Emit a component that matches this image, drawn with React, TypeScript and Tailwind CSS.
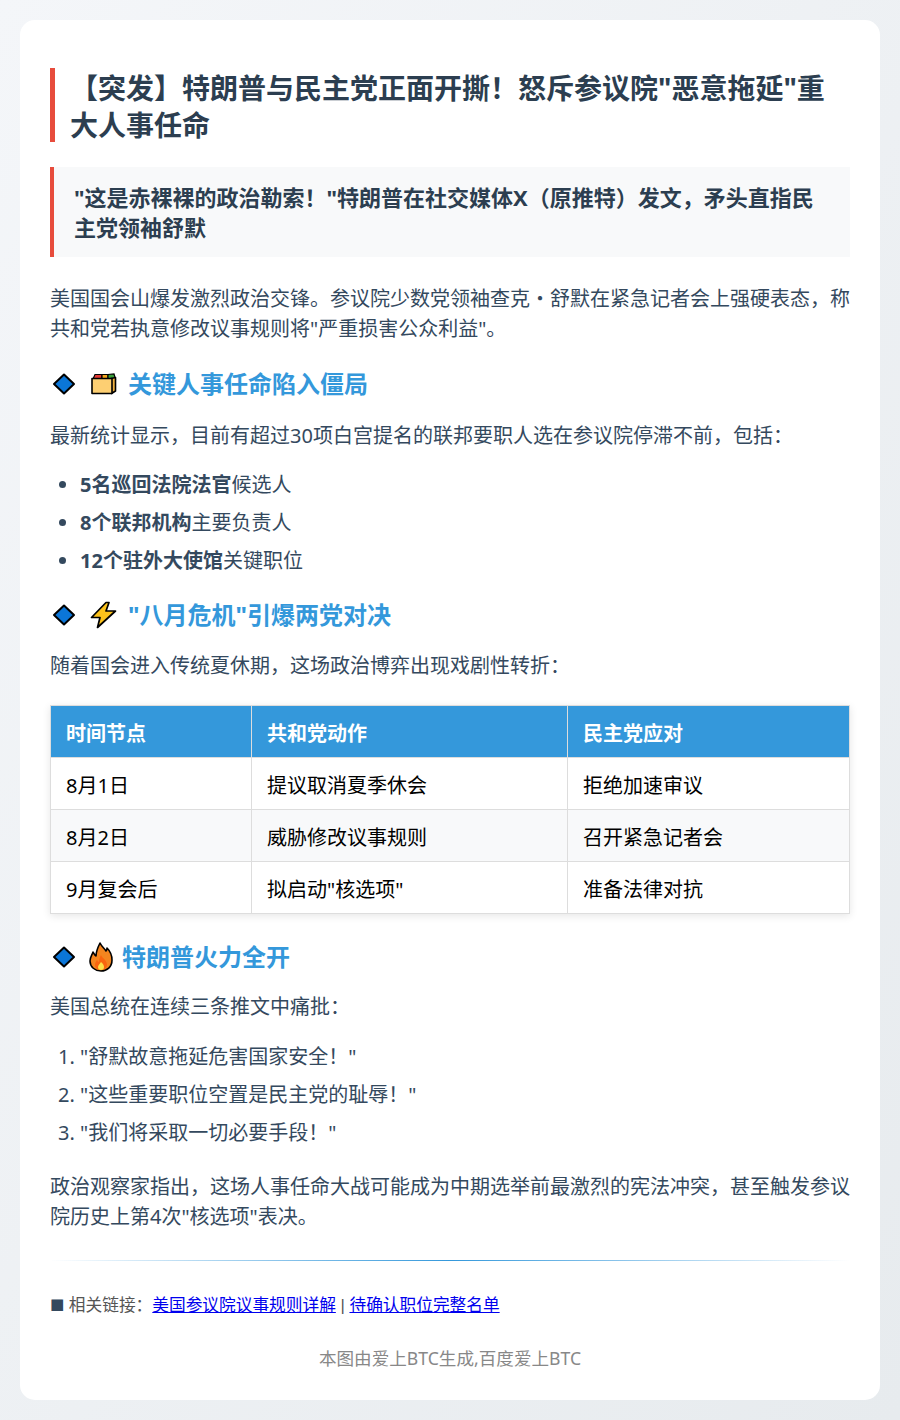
const cjk = "font-['Noto_Sans','Noto_Sans_CJK_SC',sans-serif]";

function Diamond() {
  return (
    <svg width="24" height="24" viewBox="0 0 24 24" className="shrink-0">
      <path d="M12 2.5 22 12 12 21.5 2 12Z" fill="#0b76d8" stroke="#000" strokeWidth="2" strokeLinejoin="round" />
    </svg>
  );
}

function Folder() {
  return (
    <svg width="28" height="24" viewBox="0 0 28 24" className="shrink-0">
      <path d="M4 7 6 2.500h7V7Z" fill="#e53935" stroke="#000" strokeWidth="1.200" />
      <path d="M13 2.500h6V7h-6Z" fill="#f4a51c" stroke="#000" strokeWidth="1.200" />
      <path d="M19 2.500 25 2l1.500 5H19Z" fill="#3aa03a" stroke="#000" strokeWidth="1.200" />
      <path d="M22 6.500 26.500 5.500V19L22.500 21.500Z" fill="#f0b040" stroke="#000" strokeWidth="1.600" strokeLinejoin="round" />
      <path d="M3 6.500h20v15H3Z" fill="#fdcf72" stroke="#000" strokeWidth="1.600" strokeLinejoin="round" />
    </svg>
  );
}

function Bolt() {
  return (
    <svg width="28" height="28" viewBox="0 0 28 28" className="shrink-0">
      <path d="M17 1.500 2.500 16.500h8.500L8.500 26.500 26.500 10H17l3-8.500Z" fill="#fcc21b" stroke="#000" strokeWidth="1.700" strokeLinejoin="round" />
    </svg>
  );
}

function Flame() {
  return (
    <svg width="24" height="30" viewBox="0 0 24 30" className="shrink-0">
      <path d="M11 1c2 4 4 5 6 8 1-1 1-2 1-3 3 3 5 8 5 12 0 7-5 11-11 11S1 25 1 19c0-4 2-6 3-9 1 1 1 3 3 4 0-5 2-9 4-13Z" fill="#f4851f" stroke="#000" strokeWidth="1.600" strokeLinejoin="round" />
      <path d="M12 13c1 3 6 5 6 10 0 3-3 5-6 5s-6-2-6-5c0-2 1-4 2-5 1 1 1 2 2 2 0-3 1-5 2-7Z" fill="#f9650f" />
      <path d="M12 20c2 2 3 3 3 5 0 2-1 3-3 3s-3-1-3-3c0-2 2-3 3-5Z" fill="#fde047" />
    </svg>
  );
}

function SectionTitle({ icon, title, className }: { icon: React.ReactNode; title: string; className: string }) {
  return (
    <h2 className={`flex h-[30px] items-center text-[24px] font-bold leading-[30px] text-[#3498db] ${className}`}>
      <span className="ml-[2px] mr-[13px] flex items-center"><Diamond /></span>
      {icon}
      {title}
    </h2>
  );
}

const rows = [
  ["8月1日", "提议取消夏季休会", "拒绝加速审议"],
  ["8月2日", "威胁修改议事规则", "召开紧急记者会"],
  ["9月复会后", "拟启动\"核选项\"", "准备法律对抗"],
];

export default function App() {
  return (
    <div className={`${cjk} min-h-[1420px] bg-gradient-to-br from-[#f4f6f9] to-[#e7ebee] p-[20px]`}>
      <div className="h-[1380px] rounded-[15px] bg-white px-[30px] pt-[48px] text-[20px] leading-[30px] text-[#34495e]">
        <h1 className="mb-[25px] h-[74px] border-l-[5px] border-[#e74c3c] pl-[15px] pt-[2px] text-[28px] font-bold leading-[37px] text-[#2c3e50]">
          【突发】特朗普与民主党正面开撕！怒斥参议院"恶意拖延"重大人事任命
        </h1>

        <div className="mb-[27px] border-l-[4px] border-[#e74c3c] bg-[#f8f9fa] px-[20px] py-[15px] text-[22px] font-bold leading-[30px] text-[#2c3e50]">
          "这是赤裸裸的政治勒索！"特朗普在社交媒体X（原推特）发文，矛头直指民主党领袖舒默
        </div>

        <p className="mb-[15px]">
          美国国会山爆发激烈政治交锋。参议院少数党领袖查克・舒默在紧急记者会上强硬表态，称共和党若执意修改议事规则将"严重损害公众利益"。
        </p>

        <SectionTitle icon={<span className="mr-[11px] flex items-center"><Folder /></span>} className="mt-[25px] mb-[22px]" title="关键人事任命陷入僵局" />
        <p className="mb-[19px]">最新统计显示，目前有超过30项白宫提名的联邦要职人选在参议院停滞不前，包括：</p>
        <ul className="mb-[15px] list-disc pl-[30px]">
          <li className="mb-[8px]"><strong>5名巡回法院法官</strong>候选人</li>
          <li className="mb-[8px]"><strong>8个联邦机构</strong>主要负责人</li>
          <li><strong>12个驻外大使馆</strong>关键职位</li>
        </ul>

        <SectionTitle icon={<span className="mr-[11px] flex items-center"><Bolt /></span>} className="mt-[24px] mb-[21px]" title={'"八月危机"引爆两党对决'} />
        <p className="mb-[24px]">随着国会进入传统夏休期，这场政治博弈出现戏剧性转折：</p>

        <table className="mb-[28px] w-[800px] table-fixed border-collapse text-black shadow-[0_2px_8px_rgba(0,0,0,0.1)]">
          <colgroup>
            <col className="w-[201px]" />
            <col className="w-[316px]" />
            <col />
          </colgroup>
          <thead>
            <tr className="h-[52px] bg-[#3498db] text-left text-white">
              {["时间节点", "共和党动作", "民主党应对"].map((h) => (
                <th key={h} className="border border-[#dddddd] px-[15px] pt-[5px] font-bold">{h}</th>
              ))}
            </tr>
          </thead>
          <tbody>
            {rows.map((row, i) => (
              <tr key={row[0]} className={`h-[52px] ${i === 1 ? "bg-[#f8f9fa]" : "bg-white"}`}>
                {row.map((c) => (
                  <td key={c} className="border border-[#dddddd] px-[15px] pt-[5px]">{c}</td>
                ))}
              </tr>
            ))}
          </tbody>
        </table>

        <SectionTitle icon={<span className="mr-[9px] flex items-center"><Flame /></span>} className="mb-[20px]" title="特朗普火力全开" />
        <p className="mb-[20px]">美国总统在连续三条推文中痛批：</p>
        <ol className="mb-[24px] list-decimal pl-[30px]">
          <li className="mb-[8px]">"舒默故意拖延危害国家安全！"</li>
          <li className="mb-[8px]">"这些重要职位空置是民主党的耻辱！"</li>
          <li>"我们将采取一切必要手段！"</li>
        </ol>
        <p>政治观察家指出，这场人事任命大战可能成为中期选举前最激烈的宪法冲突，甚至触发参议院历史上第4次"核选项"表决。</p>

        <div className="mt-[28px] h-px bg-gradient-to-r from-transparent via-[#3498db] to-transparent" />

        <p className="mt-[29px] text-[16.700px] leading-[30px] text-[#555555]">
          <span className="text-[14.500px] text-[#34495e]">■</span> 相关链接：
          <a href="#" className="text-[#0000ee] underline">美国参议院议事规则详解</a>
          <span className="font-['Liberation_Sans',sans-serif]">{" | "}</span>
          <a href="#" className="text-[#0000ee] underline">待确认职位完整名单</a>
        </p>

        <p className="mt-[22px] text-center text-[17.600px] leading-[30px] text-[#888888]">本图由爱上BTC生成,百度爱上BTC</p>
      </div>
    </div>
  );
}
